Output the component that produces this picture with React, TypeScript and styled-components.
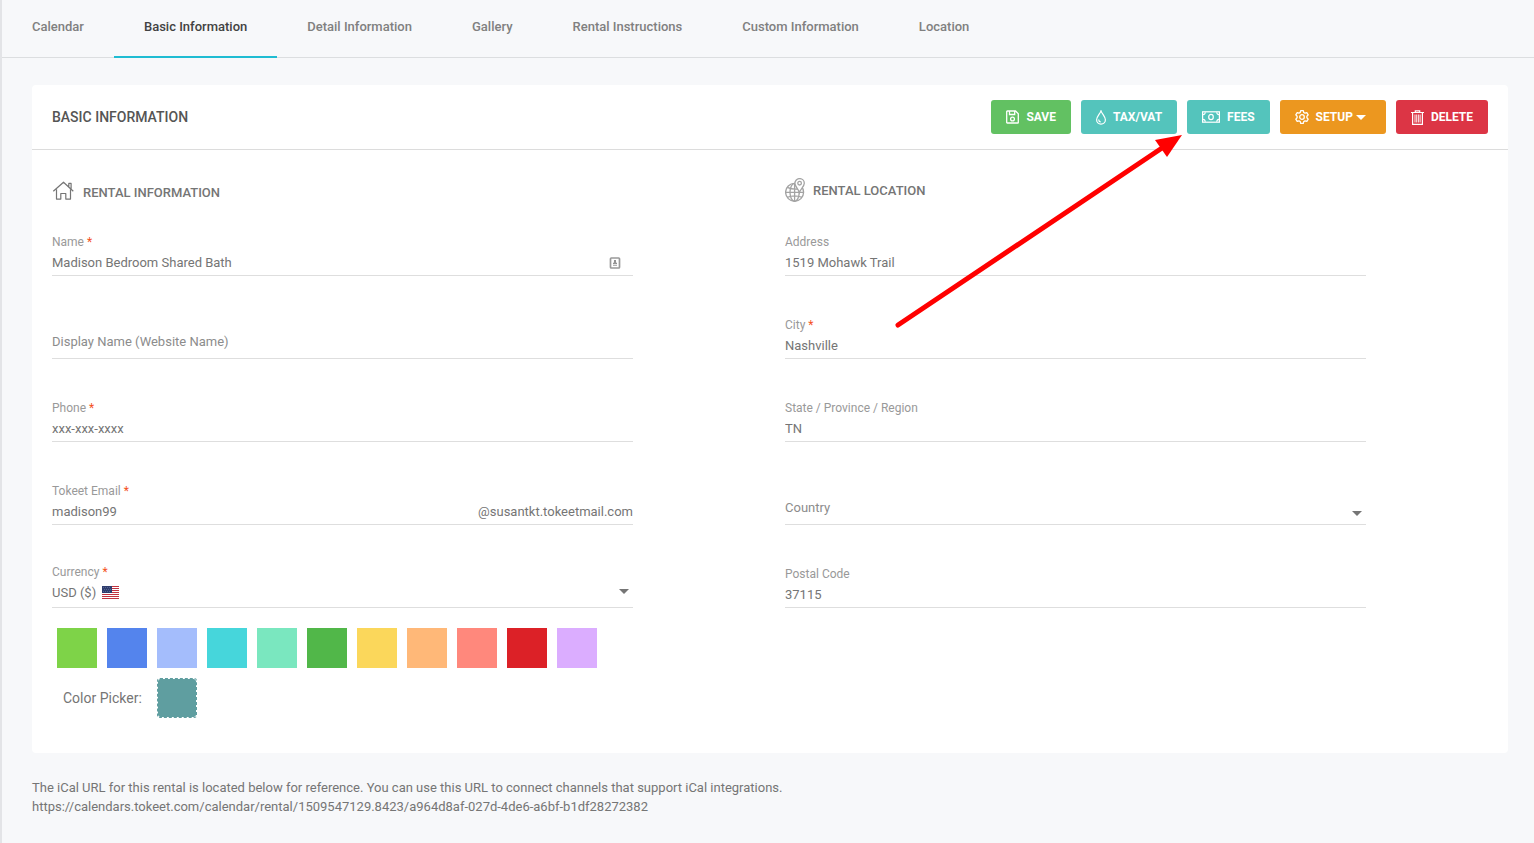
import React, { useState } from 'react';
import styled, { createGlobalStyle, css } from 'styled-components';

const GlobalStyle = createGlobalStyle`
  *, *::before, *::after { box-sizing: border-box; }
  body {
    margin: 0;
    background: #f7f8fa;
    color: #757575;
    font: 400 13px/20px Roboto, "Liberation Sans", sans-serif;
  }
  button, input, select { font: inherit; color: inherit; }
`;

const Page = styled.div`
  position: relative;
  min-height: 100vh;
  border-left: 2px solid #e3e4e7;
`;

const Tabs = styled.nav`
  display: flex;
  height: 58px;
  border-bottom: 1px solid #dcdee0;
`;

const Tab = styled.a<{ $active?: boolean }>`
  height: 58px;
  padding: 17px 30px 0;
  font-weight: 500;
  text-decoration: none;
  white-space: nowrap;
  color: ${p => (p.$active ? '#424242' : '#808080')};
  border-bottom: 2px solid ${p => (p.$active ? '#1fbcd2' : 'transparent')};
`;

const Main = styled.main`
  padding: 27px 26px 26px 30px;
`;

const Card = styled.section`
  background: #fff;
  border-radius: 4px;
`;

const CardHeader = styled.header`
  display: flex;
  align-items: center;
  justify-content: space-between;
  height: 65px;
  padding: 0 20px;
  border-bottom: 1px solid #dcdcdc;
`;

const CardTitle = styled.h1`
  margin: 0;
  font-size: 14px;
  font-weight: 500;
  color: #555;
`;

const Actions = styled.div`
  display: flex;
  gap: 10px;
`;

const ActionButton = styled.button<{ $color: string }>`
  display: flex;
  align-items: center;
  gap: 7px;
  height: 34px;
  padding: 0 15px;
  border: 0;
  border-radius: 3px;
  background: ${p => p.$color};
  color: #fff;
  font-size: 12px;
  font-weight: 700;
  white-space: nowrap;
  cursor: pointer;
`;

const WithCaret = styled.span`
  display: flex;
  align-items: center;
  gap: 3px;
  padding-right: 5px;
`;

const FormColumns = styled.form`
  display: grid;
  grid-template-columns: 1fr 1fr;
  column-gap: 152px;
  padding: 28px 142px 35px 20px;
`;

const Column = styled.div`
  min-width: 0;
`;

const SectionHead = styled.div`
  height: 48px;
`;

const SectionTitle = styled.h2`
  display: flex;
  align-items: center;
  gap: 8px;
  margin: 0;
  font-size: 13px;
  font-weight: 500;
`;

const Fields = styled.div`
  display: flex;
  flex-direction: column;
  gap: 33px;
`;

type Variant = 'text' | 'select' | 'empty';
const bottomSpace: Record<Variant, number> = { text: 2, select: 4, empty: 6 };

const Field = styled.div<{ $variant: Variant }>`
  position: relative;
  display: flex;
  flex-direction: column;
  justify-content: flex-end;
  gap: 3px;
  height: 50px;
  padding-bottom: ${p => bottomSpace[p.$variant]}px;
  border-bottom: 1px solid #dedede;
`;

const Label = styled.label`
  font-size: 12px;
  line-height: 16px;
  color: #999;
`;

const Star = styled.span`
  color: #f4511e;
`;

const Control = styled.div`
  display: flex;
  align-items: center;
  height: 20px;
`;

const bare = css`
  flex: 1;
  min-width: 0;
  height: 20px;
  padding: 0;
  border: 0;
  outline: 0;
  background: transparent;
  appearance: none;
`;

const TextInput = styled.input`
  ${bare}
  &::placeholder { color: #8c8c8c; opacity: 1; }
`;

const Select = styled.select<{ $empty?: boolean }>`
  ${bare}
  color: ${p => (p.$empty ? '#8c8c8c' : 'inherit')};
`;

const Trailing = styled.span`
  display: flex;
  padding-right: 12px;
`;

const SelectCaret = styled.span<{ $empty?: boolean }>`
  position: absolute;
  right: 4px;
  bottom: ${p => (p.$empty ? 8 : 13)}px;
  display: flex;
  color: #757575;
  pointer-events: none;
`;

const FlagSlot = styled.span`
  position: absolute;
  left: 50px;
  bottom: 8px;
  display: flex;
  pointer-events: none;
`;

const Swatches = styled.div`
  display: flex;
  flex-wrap: wrap;
  gap: 10px;
  margin: 20px 0 10px 5px;
`;

const Swatch = styled.input<{ $color: string }>`
  appearance: none;
  width: 40px;
  height: 40px;
  margin: 0;
  background: ${p => p.$color};
  cursor: pointer;
`;

const PickerRow = styled.div`
  display: flex;
  align-items: center;
  gap: 15px;
  padding-left: 11px;
  font-size: 14px;
`;

const ColorInput = styled.input`
  appearance: none;
  width: 40px;
  height: 40px;
  padding: 0;
  border: 1px dashed #5f9ea0;
  border-radius: 3px;
  background: #fff;
  cursor: pointer;
  &::-webkit-color-swatch-wrapper { padding: 0; }
  &::-webkit-color-swatch { border: 0; border-radius: 2px; }
`;

const Note = styled.p`
  margin: 25px 0 0;
  line-height: 19px;
  overflow-wrap: anywhere;
`;

const Arrow = styled.svg`
  position: absolute;
  top: 130px;
  right: 348px;
  pointer-events: none;
`;

const SaveIcon = () => (
  <svg width="13" height="14" viewBox="0 0 13 14" fill="none" stroke="currentColor" strokeWidth="1.3" aria-hidden="true">
    <path d="M1.3 1h8.200l2.800 2.700v8.700q0 .6-.6.6H1.300q-.6 0-.6-.6V1.600q0-.6.6-.6z" />
    <path d="M3.500 1v3.500h5.200V1" />
    <circle cx="6.500" cy="9" r="1.900" />
  </svg>
);

const DropIcon = () => (
  <svg width="10" height="15" viewBox="0 0 10 15" fill="none" stroke="currentColor" strokeWidth="1.2" aria-hidden="true">
    <path d="M5 .8C4.200 3.600.6 6.600.6 9.800a4.400 4.400 0 0 0 8.800 0C9.400 6.600 5.800 3.600 5 .8z" />
    <path d="M2.600 9.600a2.500 2.500 0 0 0 2.200 2.400" />
  </svg>
);

const MoneyIcon = () => (
  <svg width="18" height="12" viewBox="0 0 18 12" fill="none" stroke="currentColor" strokeWidth="1.2" aria-hidden="true">
    <rect x=".6" y=".8" width="16.800" height="10.400" />
    <path d="M1 3.600q2 0 2.300-2.400M17 3.600q-2 0-2.300-2.400M1 8.400q2 0 2.300 2.400M17 8.400q-2 0-2.300 2.400" />
    <ellipse cx="9" cy="6" rx="2.300" ry="2.700" />
  </svg>
);

const GearIcon = () => (
  <svg width="14" height="14" viewBox="0 0 14 14" fill="none" stroke="currentColor" strokeWidth="1.3" strokeLinejoin="round" aria-hidden="true">
    <path d="M5.700.7h2.600l.4 1.700 1.300.8 1.800-.6 1.400 2.300-1.300 1.300v1.600l1.300 1.300-1.400 2.300-1.800-.6-1.300.8-.4 1.700H5.700l-.4-1.700-1.300-.8-1.800.6L.8 9.100l1.300-1.300V6.200L.8 4.900l1.400-2.300 1.800.6 1.300-.8z" />
    <circle cx="7" cy="7" r="2.300" />
  </svg>
);

const TrashIcon = () => (
  <svg width="13" height="15" viewBox="0 0 13 15" fill="none" stroke="currentColor" strokeWidth="1.2" aria-hidden="true">
    <path d="M0 2.500h13M4.300 2.300V.8h4.400v1.500M1.600 2.700v11.600h9.800V2.700" />
    <path d="M4 4.500v8M5.700 4.500v8M7.400 4.500v8M9.100 4.500v8" strokeWidth=".9" />
  </svg>
);

const Caret = ({ width = 10, height = 5 }: { width?: number; height?: number }) => (
  <svg width={width} height={height} viewBox="0 0 10 5" preserveAspectRatio="none" aria-hidden="true">
    <path d="M0 0h10L5 5z" fill="currentColor" />
  </svg>
);

const HouseIcon = () => (
  <svg width="23" height="30" viewBox="0 0 23 30" fill="none" stroke="#757575" strokeWidth="1.200" strokeLinejoin="round" aria-hidden="true">
    <path d="M1.300 13.200 11.500 4.200 21.300 13.200M16.800 8.600V5.400h2.300v5.500" />
    <path d="M4.500 11.200v9.900h4.300v-5.600h5v5.600h4.700v-9.900" />
  </svg>
);

const GlobeIcon = () => (
  <svg width="20" height="26" viewBox="0 0 20 26" fill="none" stroke="#a3a3a3" strokeWidth="1.300" aria-hidden="true">
    <circle cx="9.600" cy="14.300" r="9" />
    <ellipse cx="9.600" cy="14.300" rx="4.600" ry="9" />
    <path d="M9.600 5.300v18M.6 14.300h18M2.200 9.300q7.400 3 13.400 1M2.200 19.300q7.400-3 14.800 0" />
    <path d="M14.400 14.400C13.500 11.400 9.900 8.600 9.900 5.300a4.700 4.700 0 0 1 9.400 0c0 3.300-4 6.100-4.900 9.100z" fill="#fff" />
    <circle cx="14.600" cy="5.200" r="1.800" />
  </svg>
);

const CardIcon = () => (
  <svg width="12" height="12" viewBox="0 0 12 12" aria-hidden="true">
    <rect x="1.500" y="1" width="9" height="10" rx=".8" fill="#fff" stroke="#999" strokeWidth="1.700" />
    <circle cx="6" cy="4" r="1.100" fill="#777" />
    <path d="M4 6.600q2-2.600 4 0zM4 8.300h4" fill="#888" stroke="#888" strokeWidth=".8" />
  </svg>
);

const FlagIcon = () => (
  <svg width="17" height="13" viewBox="0 0 17 13" shapeRendering="crispEdges" aria-hidden="true">
    <rect width="17" height="13" fill="#fff" />
    {[0, 2, 4, 6, 8, 10, 12].map(y => (
      <rect key={y} y={y} width="17" height="1" fill="#c1323f" />
    ))}
    <rect width="10" height="7" fill="#2f3e6e" />
    <path d="M1 1.500h8M2 3.500h7M1 5.500h8" stroke="#566592" strokeWidth="1" strokeDasharray="1 1" />
  </svg>
);

const tabs = ['Calendar', 'Basic Information', 'Detail Information', 'Gallery', 'Rental Instructions', 'Custom Information', 'Location'];

const swatchColors = ['#7ed348', '#5484ed', '#a4bdfc', '#46d6db', '#7ae7bf', '#51b749', '#fbd75b', '#ffb878', '#ff887c', '#dc2127', '#dbadff'];

interface TextFieldProps {
  id: string;
  label: string;
  value?: string;
  required?: boolean;
  type?: string;
  trailing?: React.ReactNode;
}

const FieldLabel = ({ id, label, required }: { id: string; label: string; required?: boolean }) => (
  <Label htmlFor={id}>
    {label}
    {required && <Star> *</Star>}
  </Label>
);

const TextField = ({ id, label, value, required, type = 'text', trailing }: TextFieldProps) => (
  <Field $variant={value ? 'text' : 'empty'}>
    {value && <FieldLabel id={id} label={label} required={required} />}
    <Control>
      <TextInput
        id={id}
        type={type}
        defaultValue={value}
        placeholder={value ? undefined : label}
        aria-label={value ? undefined : label}
      />
      {trailing}
    </Control>
  </Field>
);

export default function App() {
  const [color, setColor] = useState('#5f9ea0');

  return (
    <>
      <GlobalStyle />
      <Page>
        <Tabs aria-label="Rental sections">
          {tabs.map(name => (
            <Tab
              key={name}
              href="#"
              $active={name === 'Basic Information'}
              aria-current={name === 'Basic Information' ? 'page' : undefined}
            >
              {name}
            </Tab>
          ))}
        </Tabs>

        <Main>
          <Card>
            <CardHeader>
              <CardTitle>BASIC INFORMATION</CardTitle>
              <Actions>
                <ActionButton type="button" $color="#62c162"><SaveIcon />SAVE</ActionButton>
                <ActionButton type="button" $color="#54c4bc"><DropIcon />TAX/VAT</ActionButton>
                <ActionButton type="button" $color="#54c4bc"><MoneyIcon />FEES</ActionButton>
                <ActionButton type="button" $color="#ec971f">
                  <GearIcon />
                  <WithCaret>SETUP<Caret width={10} /></WithCaret>
                </ActionButton>
                <ActionButton type="button" $color="#dc3545"><TrashIcon />DELETE</ActionButton>
              </Actions>
            </CardHeader>

            <FormColumns>
              <Column>
                <SectionHead>
                  <SectionTitle><HouseIcon />RENTAL INFORMATION</SectionTitle>
                </SectionHead>
                <Fields>
                  <TextField id="name" label="Name" value="Madison Bedroom Shared Bath" required trailing={<Trailing><CardIcon /></Trailing>} />
                  <TextField id="display-name" label="Display Name (Website Name)" />
                  <TextField id="phone" label="Phone" value="xxx-xxx-xxxx" type="tel" required />
                  <TextField id="email" label="Tokeet Email" value="madison99" required trailing={<span>@susantkt.tokeetmail.com</span>} />
                  <Field $variant="select">
                    <FieldLabel id="currency" label="Currency" required />
                    <Control>
                      <Select id="currency"><option>USD ($)</option></Select>
                    </Control>
                    <FlagSlot><FlagIcon /></FlagSlot>
                    <SelectCaret><Caret /></SelectCaret>
                  </Field>
                </Fields>
                <Swatches role="radiogroup" aria-label="Rental color">
                  {swatchColors.map(c => (
                    <Swatch key={c} type="radio" name="color" value={c} $color={c} aria-label={c} onChange={() => setColor(c)} />
                  ))}
                </Swatches>
                <PickerRow>
                  <label htmlFor="picker">Color Picker:</label>
                  <ColorInput id="picker" type="color" value={color} onChange={e => setColor(e.target.value)} />
                </PickerRow>
              </Column>

              <Column>
                <SectionHead>
                  <SectionTitle><GlobeIcon />RENTAL LOCATION</SectionTitle>
                </SectionHead>
                <Fields>
                  <TextField id="address" label="Address" value="1519 Mohawk Trail" />
                  <TextField id="city" label="City" value="Nashville" required />
                  <TextField id="state" label="State / Province / Region" value="TN" />
                  <Field $variant="empty">
                    <Control>
                      <Select id="country" aria-label="Country" $empty><option>Country</option></Select>
                    </Control>
                    <SelectCaret $empty><Caret /></SelectCaret>
                  </Field>
                  <TextField id="postal" label="Postal Code" value="37115" />
                </Fields>
              </Column>
            </FormColumns>
          </Card>

          <Note>
            The iCal URL for this rental is located below for reference. You can use this URL to connect channels that support iCal integrations.
            <br />
            https://calendars.tokeet.com/calendar/rental/1509547129.8423/a964d8af-027d-4de6-a6bf-b1df28272382
          </Note>
        </Main>

        <Arrow width="296" height="200" viewBox="0 0 296 200" aria-hidden="true">
          <path d="M8 195 272 18" stroke="#f00" strokeWidth="5" strokeLinecap="round" />
          <path d="M292 5 265 10 277 27z" fill="#f00" />
        </Arrow>
      </Page>
    </>
  );
}
